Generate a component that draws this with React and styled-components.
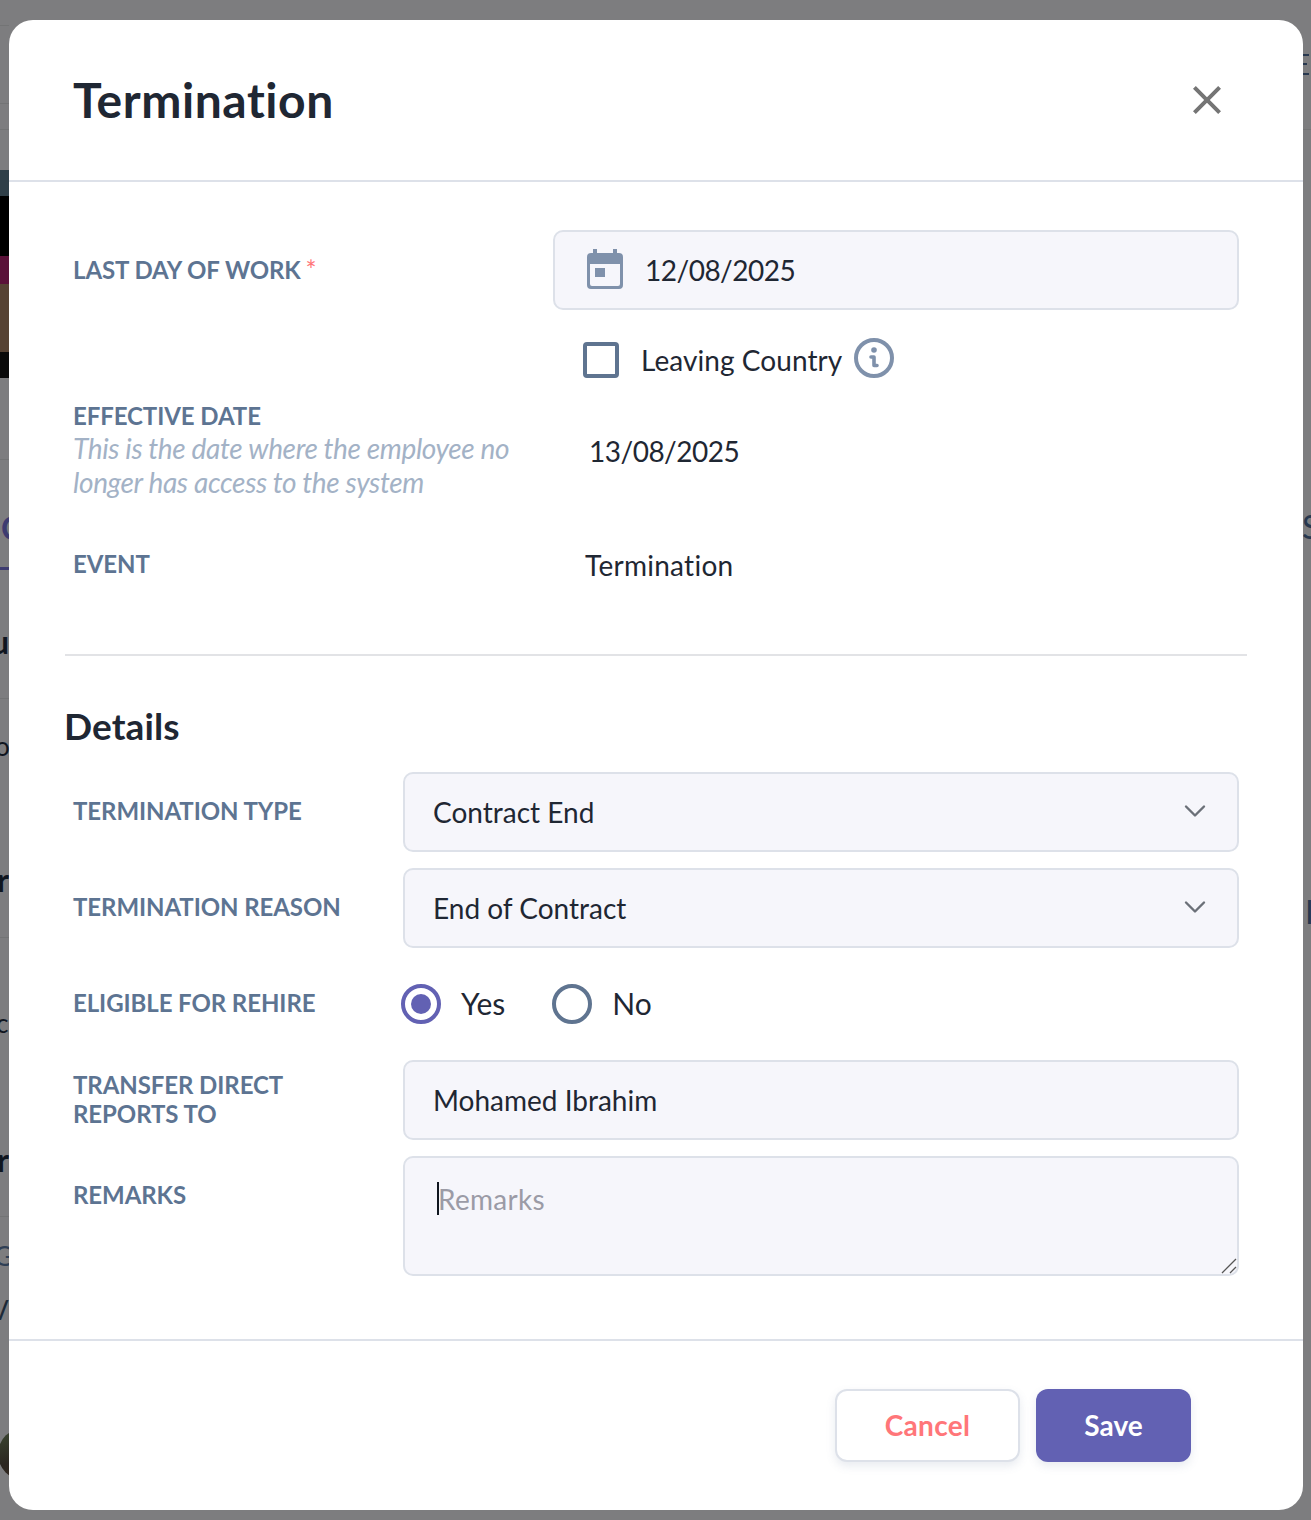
import React from "react";
import styled, { createGlobalStyle } from "styled-components";
import { MdClose } from "react-icons/md";
import { FiChevronDown } from "react-icons/fi";

const GlobalStyle = createGlobalStyle`
	html, body {
		margin: 0;
		padding: 0;
	}
	body {
		font-family: "Lato", "Liberation Sans", sans-serif;
		font-variant-ligatures: none;
		color: #1f2733;
	}
	* {
		box-sizing: border-box;
	}
`;

const Backdrop = styled.div`
	position: relative;
	width: 1311px;
	height: 1520px;
	overflow: hidden;
	background: #7d7d7f;
	padding: 20px 8px 10px 9px;
`;

// bits of the page behind the overlay, only a few pixels show at the edges
const PeekLine = styled.div`
	position: absolute;
	left: ${(p) => p.$left}px;
	top: ${(p) => p.$top}px;
	width: ${(p) => p.$width}px;
	height: ${(p) => p.$height || 1}px;
	background: ${(p) => p.$color || "#737475"};
`;

const PeekGlyph = styled.span`
	position: absolute;
	left: ${(p) => p.$left}px;
	top: ${(p) => p.$top}px;
	font-size: ${(p) => p.$size || 32}px;
	font-weight: ${(p) => p.$weight || 400};
	line-height: 1;
	color: ${(p) => p.$color || "#10161f"};
`;

const PeekAvatar = styled.div`
	position: absolute;
	left: -2px;
	top: 1428px;
	width: 52px;
	height: 52px;
	border-radius: 50%;
	background: linear-gradient(160deg, #3d4a33 0%, #2b2620 55%, #3a2a20 100%);
`;

const Modal = styled.div`
	position: relative;
	display: flex;
	flex-direction: column;
	height: 1490px;
	background: #fff;
	border-radius: 24px;
	overflow: hidden;
`;

const Header = styled.header`
	display: flex;
	align-items: center;
	justify-content: space-between;
	height: 162px;
	flex-shrink: 0;
	padding: 0 72px 0 64px;
	border-bottom: 2px solid #dde1e9;
`;

const Title = styled.h1`
	margin: 0;
	font-size: 48px;
	font-weight: 700;
	line-height: 1;
	letter-spacing: 0.55px;
	color: #1f2733;
`;

const CloseButton = styled.button`
	display: flex;
	padding: 0;
	border: none;
	background: none;
	color: #757575;
`;

const Body = styled.div`
	flex: 1;
	padding: 48px 56px 0;
`;

const TopGrid = styled.div`
	padding: 0 8px;
`;

const TopRow = styled.div`
	display: grid;
	grid-template-columns: 480px 686px;
	align-items: ${(p) => p.$align || "start"};
	margin-top: ${(p) => p.$mt || 0}px;
`;

const Label = styled.label`
	display: block;
	font-size: 24px;
	font-weight: 700;
	line-height: 29px;
	letter-spacing: -0.08px;
	color: #5d7492;
`;

const FirstLabel = styled(Label)`
	margin-top: -2px;
`;

const Required = styled.span`
	font-size: 26px;
	font-weight: 400;
	letter-spacing: 0;
	line-height: 1;
	margin-left: -1px;
	color: #ff7679;
	vertical-align: -1px;
`;

const Helper = styled.p`
	margin: 1px 0 0;
	font-size: 28px;
	font-style: italic;
	font-weight: 400;
	line-height: 34px;
	letter-spacing: -0.35px;
	color: #a3b2c6;
`;

const Field = styled.div`
	display: flex;
	align-items: center;
	height: 80px;
	padding: 0 ${(p) => p.$pr || 28}px 0 ${(p) => p.$pl || 28}px;
	background: #f6f6fb;
	border: 2px solid #dde1e9;
	border-radius: 10px;
	font-size: 28px;
	color: #1f2733;
`;

const FieldText = styled.span`
	flex: 1;
`;

const DateText = styled.span`
	flex: 1;
	letter-spacing: -0.5px;
`;

const CalendarIcon = styled.svg`
	width: 36px;
	height: 40px;
	margin: -2px 22px 0 0;
	color: #7f91ab;
`;

const Chevron = styled(FiChevronDown)`
	width: 36px;
	height: 36px;
	margin-top: -3px;
	stroke-width: 1.6;
	color: #6b7078;
`;

const CheckRow = styled.div`
	display: flex;
	align-items: center;
	padding-left: 30px;
	height: 36px;
	font-size: 28px;
	letter-spacing: 0.07px;
`;

const CheckBox = styled.span`
	display: block;
	width: 36px;
	height: 36px;
	border: 4px solid #5f7490;
	border-radius: 4px;
	margin-right: 22px;
`;

const InfoIcon = styled.svg`
	width: 40px;
	height: 40px;
	margin: -4px 0 0 12px;
	color: #7f91ab;
`;

const PlainValue = styled.div`
	font-size: 28px;
	line-height: 36px;
	padding-left: ${(p) => p.$pl || 32}px;
	letter-spacing: ${(p) => p.$spacing || 0}px;
	margin-top: ${(p) => p.$mt || 0}px;
`;

const Divider = styled.hr`
	margin: 71px 0 0;
	border: none;
	border-top: 2px solid #e2e3e6;
`;

const SectionTitle = styled.h2`
	margin: 48px 0 24px -1px;
	font-size: 37px;
	font-weight: 700;
	line-height: 44px;
	letter-spacing: 0.1px;
	color: #1f2733;
`;

const DetailRows = styled.div`
	display: flex;
	flex-direction: column;
	gap: 16px;
	padding: 0 8px;
`;

const DetailRow = styled.div`
	display: grid;
	grid-template-columns: 330px 836px;
	align-items: start;
`;

const DetailLabel = styled(Label)`
	padding-top: ${(p) => p.$pt ?? 24}px;
	padding-right: 40px;
`;

const RadioRow = styled.div`
	display: flex;
	align-items: center;
	height: 96px;
	margin: -8px 0;
	font-size: 30px;
`;

const RadioOption = styled.div`
	display: flex;
	align-items: center;
	gap: 20px;
	margin-right: 47px;
	margin-left: ${(p) => p.$ml || 0}px;
`;

const RadioText = styled.span`
	margin-top: -2px;
`;

const RadioCircle = styled.span`
	display: flex;
	align-items: center;
	justify-content: center;
	width: 40px;
	height: 40px;
	border-radius: 50%;
	border: 4px solid ${(p) => (p.$checked ? "#6261b3" : "#5f7490")};

	&::after {
		content: "";
		display: ${(p) => (p.$checked ? "block" : "none")};
		width: 20px;
		height: 20px;
		border-radius: 50%;
		background: #6261b3;
	}
`;

const TextAreaWrap = styled.div`
	position: relative;
	display: flex;
`;

const TextArea = styled.textarea`
	display: block;
	width: 100%;
	height: 120px;
	padding: 23px 33px;
	background: #f6f6fb;
	border: 2px solid #dde1e9;
	border-radius: 10px;
	font-family: inherit;
	font-size: 28px;
	line-height: 36px;
	letter-spacing: 0.3px;
	color: #1f2733;
	outline: none;
	resize: none;

	&::placeholder {
		color: #9b9ba6;
		opacity: 1;
	}
`;

const Caret = styled.span`
	position: absolute;
	left: 34px;
	top: 26px;
	width: 2px;
	height: 33px;
	background: #10161f;
`;

const Grip = styled.svg`
	position: absolute;
	right: 2px;
	bottom: 2px;
	width: 16px;
	height: 16px;
	color: #555;
`;

const Footer = styled.footer`
	display: flex;
	justify-content: flex-end;
	gap: 16px;
	height: 171px;
	flex-shrink: 0;
	padding: 48px 112px 0 0;
	border-top: 2px solid #dde1e9;
`;

const Button = styled.button`
	width: ${(p) => p.$width}px;
	height: 73px;
	padding: 0 0 2px;
	border-radius: 12px;
	font-family: inherit;
	font-size: 28px;
	font-weight: 700;
	letter-spacing: ${(p) => (p.$primary ? 0 : 0.3)}px;
	border: ${(p) => (p.$primary ? "none" : "2px solid #dde1e9")};
	background: ${(p) => (p.$primary ? "#6261b3" : "#fff")};
	color: ${(p) => (p.$primary ? "#fff" : "#ff7679")};
	box-shadow: 0 4px 10px rgba(93, 116, 146, 0.14);
`;

const App = () => (
	<>
		<GlobalStyle />
		<Backdrop>
			<PeekLine $left={0} $top={25} $width={9} />
			<PeekLine $left={0} $top={103} $width={9} />
			<PeekLine $left={0} $top={129} $width={9} />
			<PeekLine $left={0} $top={170} $width={9} $height={26} $color="#2f3f48" />
			<PeekLine $left={0} $top={196} $width={9} $height={60} $color="#000" />
			<PeekLine $left={0} $top={256} $width={9} $height={28} $color="#5a1138" />
			<PeekLine $left={0} $top={284} $width={9} $height={68} $color="#564233" />
			<PeekLine $left={0} $top={352} $width={9} $height={26} $color="#0a0a0a" />
			<PeekLine $left={0} $top={459} $width={9} />
			<PeekLine $left={0} $top={567} $width={9} $height={3} $color="#3e3c70" />
			<PeekLine $left={0} $top={698} $width={9} />
			<PeekLine $left={0} $top={937} $width={9} />
			<PeekLine $left={0} $top={1216} $width={9} />
			<PeekLine $left={1303} $top={129} $width={8} />
			<PeekLine $left={1303} $top={54} $width={6} $height={2} $color="#28384f" />
			<PeekLine $left={1303} $top={63} $width={4} $height={2} $color="#28384f" />
			<PeekLine $left={1303} $top={73} $width={6} $height={2} $color="#28384f" />
			<PeekGlyph $left={1} $top={512} $color="#3e3c70" $weight={700}>C</PeekGlyph>
			<PeekGlyph $left={-9} $top={626} $weight={700}>u</PeekGlyph>
			<PeekGlyph $left={-5} $top={733} $size={26}>o</PeekGlyph>
			<PeekGlyph $left={-3} $top={864} $weight={700}>r</PeekGlyph>
			<PeekGlyph $left={-4} $top={1010} $size={26}>c</PeekGlyph>
			<PeekGlyph $left={-3} $top={1144} $weight={700}>r</PeekGlyph>
			<PeekGlyph $left={-6} $top={1243} $size={26} $color="#2f3f55">G</PeekGlyph>
			<PeekGlyph $left={-9} $top={1297} $size={26} $color="#1c2a38">V</PeekGlyph>
			<PeekGlyph $left={1302} $top={511} $color="#28384f">S</PeekGlyph>
			<PeekGlyph $left={1305} $top={896} $color="#28384f">I</PeekGlyph>
			<PeekAvatar />

			<Modal>
				<Header>
					<Title>Termination</Title>
					<CloseButton aria-label="Close">
						<MdClose size={48} />
					</CloseButton>
				</Header>

				<Body>
					<TopGrid>
						<TopRow $align="center">
							<FirstLabel>
								LAST DAY OF WORK <Required>*</Required>
							</FirstLabel>
							<Field $pl={32}>
								<CalendarIcon viewBox="0 0 36 40">
									<path
										fill="currentColor"
										fillRule="evenodd"
										d="M6 0h4v4h16V0h4v4h2a4 4 0 0 1 4 4v28a4 4 0 0 1-4 4H4a4 4 0 0 1-4-4V8a4 4 0 0 1 4-4h2V0zM3 15v20a2 2 0 0 0 2 2h26a2 2 0 0 0 2-2V15H3zm5 4h10v9H8v-9z"
									/>
								</CalendarIcon>
								<DateText>12/08/2025</DateText>
							</Field>
						</TopRow>
						<TopRow $mt={32}>
							<div />
							<CheckRow>
								<CheckBox />
								Leaving Country
								<InfoIcon viewBox="0 0 40 40" fill="none">
									<circle cx="20" cy="20" r="18" stroke="currentColor" strokeWidth="4" />
									<circle cx="20" cy="12" r="2.8" fill="currentColor" />
									<path d="M17 19H20V27.5H23" stroke="currentColor" strokeWidth="3.6" strokeLinecap="round" strokeLinejoin="round" />
								</InfoIcon>
							</CheckRow>
						</TopRow>
						<TopRow $mt={23} $align="center">
							<div>
								<Label>EFFECTIVE DATE</Label>
								<Helper>This is the date where the employee no longer has access to the system</Helper>
							</div>
							<PlainValue $pl={36} $spacing={-0.5} $mt={2}>13/08/2025</PlainValue>
						</TopRow>
						<TopRow $mt={50}>
							<Label>EVENT</Label>
							<PlainValue $mt={-2} $spacing={0.27}>Termination</PlainValue>
						</TopRow>
					</TopGrid>

					<Divider />
					<SectionTitle>Details</SectionTitle>

					<DetailRows>
						<DetailRow>
							<DetailLabel>TERMINATION TYPE</DetailLabel>
							<Field $pr={24}>
								<FieldText>Contract End</FieldText>
								<Chevron />
							</Field>
						</DetailRow>
						<DetailRow>
							<DetailLabel>TERMINATION REASON</DetailLabel>
							<Field $pr={24}>
								<FieldText>End of Contract</FieldText>
								<Chevron />
							</Field>
						</DetailRow>
						<DetailRow>
							<DetailLabel>ELIGIBLE FOR REHIRE</DetailLabel>
							<RadioRow>
								<RadioOption $ml={-2}>
									<RadioCircle $checked />
									<RadioText>Yes</RadioText>
								</RadioOption>
								<RadioOption>
									<RadioCircle />
									<RadioText>No</RadioText>
								</RadioOption>
							</RadioRow>
						</DetailRow>
						<DetailRow>
							<DetailLabel $pt={10}>TRANSFER DIRECT REPORTS TO</DetailLabel>
							<Field>
								<FieldText>Mohamed Ibrahim</FieldText>
							</Field>
						</DetailRow>
						<DetailRow>
							<DetailLabel>REMARKS</DetailLabel>
							<TextAreaWrap>
								<TextArea placeholder="Remarks" />
								<Caret />
								<Grip viewBox="0 0 16 16" fill="none" stroke="currentColor" strokeWidth="1.3">
									<path d="M1 15L15 1M9 15L15 9" />
								</Grip>
							</TextAreaWrap>
						</DetailRow>
					</DetailRows>
				</Body>

				<Footer>
					<Button $width={185}>Cancel</Button>
					<Button $primary $width={155}>Save</Button>
				</Footer>
			</Modal>
		</Backdrop>
	</>
);

export default App;
